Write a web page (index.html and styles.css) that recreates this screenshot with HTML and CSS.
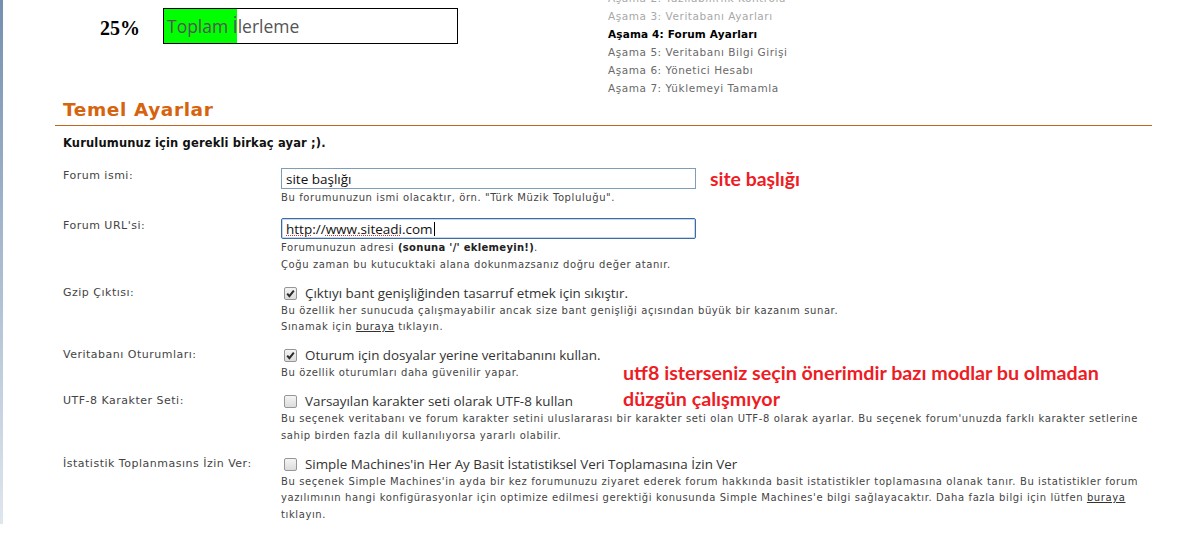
FILE: index.html
```html
<!DOCTYPE html>
<html lang="tr">
<head>
<meta charset="utf-8">
<title>Forum Ayarları</title>
<link rel="stylesheet" href="styles.css">
</head>
<body>
<div class="window">
  <div class="top">
    <div class="progress">
      <span class="pct">25%</span>
      <div class="bar">
        <div class="fill" style="width:25%"></div>
        <span class="bar-label">Toplam İlerleme</span>
      </div>
    </div>
    <ul class="steps">
      <li class="done">Aşama 2: Yazılabilirlik Kontrolü</li>
      <li class="done">Aşama 3: Veritabanı Ayarları</li>
      <li class="current">Aşama 4: Forum Ayarları</li>
      <li class="todo">Aşama 5: Veritabanı Bilgi Girişi</li>
      <li class="todo">Aşama 6: Yönetici Hesabı</li>
      <li class="todo">Aşama 7: Yüklemeyi Tamamla</li>
    </ul>
  </div>

  <section class="panel">
    <h2 class="title">Temel Ayarlar</h2>
    <p class="intro">Kurulumunuz için gerekli birkaç ayar ;).</p>

    <div class="form">
      <div class="row">
        <label class="label">Forum ismi:</label>
        <div class="field">
          <div class="input-line">
            <span class="input">site başlığı</span>
            <span class="note note-inline">site başlığı</span>
          </div>
          <div class="desc">Bu forumunuzun ismi olacaktır, örn. "Türk Müzik Topluluğu".</div>
        </div>
      </div>

      <div class="row">
        <label class="label">Forum URL'si:</label>
        <div class="field">
          <div class="input-line">
            <span class="input focus"><span class="squiggle">http</span>://<span class="squiggle">www.siteadi</span>.com<span class="caret"></span></span>
          </div>
          <div class="desc">Forumunuzun adresi <b>(sonuna '/' eklemeyin!)</b>.<br>Çoğu zaman bu kutucuktaki alana dokunmazsanız doğru değer atanır.</div>
        </div>
      </div>

      <div class="row">
        <label class="label">Gzip Çıktısı:</label>
        <div class="field">
          <div class="check-line"><span class="cb checked"><svg viewBox="0 0 13 13" width="13" height="13"><path d="M3.2 6.6 L5.4 9.2 L9.8 3.6" fill="none" stroke="#2b2b2b" stroke-width="2"/></svg></span>Çıktıyı bant genişliğinden tasarruf etmek için sıkıştır.</div>
          <div class="desc">Bu özellik her sunucuda çalışmayabilir ancak size bant genişliği açısından büyük bir kazanım sunar.<br>Sınamak için <a href="#">buraya</a> tıklayın.</div>
        </div>
      </div>

      <div class="row">
        <label class="label">Veritabanı Oturumları:</label>
        <div class="field">
          <div class="check-line"><span class="cb checked"><svg viewBox="0 0 13 13" width="13" height="13"><path d="M3.2 6.6 L5.4 9.2 L9.8 3.6" fill="none" stroke="#2b2b2b" stroke-width="2"/></svg></span>Oturum için dosyalar yerine veritabanını kullan.</div>
          <div class="desc">Bu özellik oturumları daha güvenilir yapar.</div>
        </div>
      </div>

      <div class="row">
        <label class="label">UTF-8 Karakter Seti:</label>
        <div class="field">
          <div class="check-line"><span class="cb"></span>Varsayılan karakter seti olarak UTF-8 kullan</div>
          <div class="desc">Bu seçenek veritabanı ve forum karakter setini uluslararası bir karakter seti olan UTF-8 olarak ayarlar. Bu seçenek forum'unuzda farklı karakter setlerine sahip birden fazla dil kullanılıyorsa yararlı olabilir.</div>
        </div>
      </div>

      <div class="row">
        <label class="label">İstatistik Toplanmasıns İzin Ver:</label>
        <div class="field">
          <div class="check-line"><span class="cb"></span>Simple Machines'in Her Ay Basit İstatistiksel Veri Toplamasına İzin Ver</div>
          <div class="desc">Bu seçenek Simple Machines'in ayda bir kez forumunuzu ziyaret ederek forum hakkında basit istatistikler toplamasına olanak tanır. Bu istatistikler forum yazılımının hangi konfigürasyonlar için optimize edilmesi gerektiği konusunda Simple Machines'e bilgi sağlayacaktır. Daha fazla bilgi için lütfen <a href="#">buraya</a> tıklayın.</div>
        </div>
      </div>

      <div class="note note-overlay">utf8 isterseniz seçin önerimdir bazı modlar bu olmadan<br>düzgün çalışmıyor</div>
    </div>
  </section>
</div>
</body>
</html>
```

FILE: styles.css
```css
html, body {
  margin: 0;
  padding: 0;
  background: #ffffff;
}

body {
  font-family: "DejaVu Sans", Verdana, sans-serif;
  color: #333;
  overflow: hidden;
}

.window {
  height: 524px;
  background-image: linear-gradient(to bottom, #7490b0, #b4c4d6 60%, #dfe6ee);
  background-size: 3px 100%;
  background-repeat: no-repeat;
  overflow: hidden;
}

/* ---------- top area ---------- */
.top {
  display: flex;
  align-items: flex-start;
  padding-left: 100px;
}

.progress {
  display: flex;
  align-items: center;
  margin-top: 8px;
}

.pct {
  font-family: "Liberation Serif", "Times New Roman", serif;
  font-weight: bold;
  font-size: 20px;
  color: #000;
  width: 63px;
  padding-top: 4px;
}

.bar {
  display: grid;
  width: 293px;
  height: 34px;
  border: 1px solid #000;
  background: #fff;
}

.fill,
.bar-label {
  grid-area: 1 / 1;
}

.fill {
  background: #00ff00;
  height: 100%;
}

.bar-label {
  font-family: "Open Sans", "Noto Sans", sans-serif;
  font-size: 17.5px;
  color: #555;
  align-self: center;
  padding-left: 3px;
  line-height: 22px;
}

.steps {
  list-style: none;
  margin: -11px 0 0 150px;
  padding: 0;
  font-size: 10.5px;
  letter-spacing: 0.55px;
  line-height: 18px;
}

.steps .done { color: #a8a8a8; }
.steps .current { color: #000; font-weight: bold; letter-spacing: 0.15px; }
.steps .todo { color: #6a6a6a; }

/* ---------- panel ---------- */
.panel {
  margin: 0 25px 0 55px;
}

.title {
  margin: 2px 0 0;
  padding: 0 0 4px 8px;
  font-size: 18.5px;
  letter-spacing: 0.6px;
  line-height: 22px;
  font-weight: bold;
  color: #d6640e;
  border-bottom: 1px solid #c2641e;
}

.intro {
  margin: 9px 0 0;
  padding-left: 8px;
  font-size: 11.5px;
  letter-spacing: 0.15px;
  font-weight: bold;
  line-height: 16px;
  color: #111;
}

.form {
  position: relative;
  margin-top: 17px;
  padding-left: 8px;
  display: flex;
  flex-direction: column;
  gap: 11.5px;
}

.row {
  display: grid;
  grid-template-columns: 218px 1fr;
}

.label {
  font-size: 11px;
  letter-spacing: 0.5px;
  line-height: 15px;
  color: #444;
}

.input-line {
  display: flex;
  align-items: center;
}

.input {
  box-sizing: border-box;
  display: flex;
  align-items: center;
  width: 415px;
  height: 21px;
  border: 1px solid #7f9db9;
  padding-left: 4px;
  font-family: "Open Sans", "Noto Sans", sans-serif;
  font-size: 13.5px;
  color: #111;
  background: #fff;
}

.input.focus {
  border: 1px solid #3d6ca5;
  box-shadow: inset 0 0 0 1px #c5d8ee;
  border-radius: 2px;
}

.squiggle {
  text-decoration: underline dotted #e23030;
  text-decoration-thickness: 1px;
  text-underline-offset: 1px;
}

.caret {
  display: inline-block;
  width: 1px;
  height: 14px;
  background: #000;
  margin-left: 1px;
}

.desc {
  margin-top: 1px;
  font-size: 10px;
  letter-spacing: 0.6px;
  line-height: 16.5px;
  color: #444;
}

.desc b {
  color: #222;
  letter-spacing: 0.3px;
}

.desc a {
  color: #333;
  text-decoration: underline;
}

.check-line {
  display: flex;
  align-items: center;
  font-family: "Open Sans", "Noto Sans", sans-serif;
  font-size: 13.4px;
  line-height: 17px;
  color: #333;
}

.cb {
  box-sizing: border-box;
  width: 13px;
  height: 13px;
  margin: 0 8px 0 3px;
  border: 1px solid #969696;
  border-radius: 2px;
  background: linear-gradient(to bottom, #f4f4f4, #dcdcdc);
  display: inline-flex;
  align-items: center;
  justify-content: center;
  flex: none;
}

.cb svg {
  display: block;
  margin: -1px;
}

.note {
  font-family: "Lato", "Liberation Sans", sans-serif;
  font-weight: bold;
  color: #ee1c25;
}

.note-inline {
  font-size: 19.4px;
  margin-left: 14px;
  line-height: 21px;
}

.note-overlay {
  position: absolute;
  left: 568px;
  top: 192px;
  font-size: 19.7px;
  line-height: 26px;
}
```
